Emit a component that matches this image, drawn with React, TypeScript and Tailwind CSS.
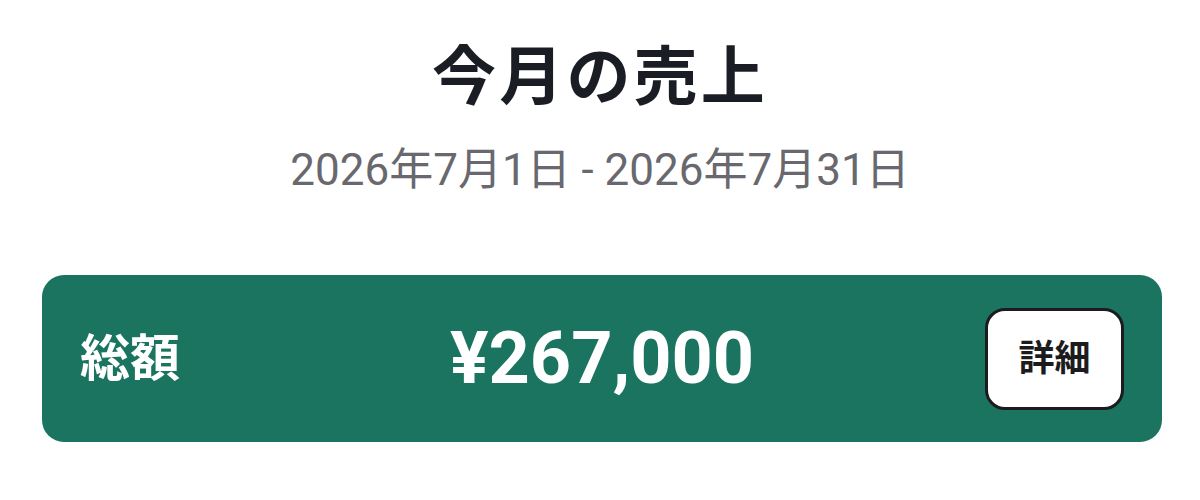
const font = { fontFamily: 'Roboto, "Noto Sans CJK JP", sans-serif' };

export default function App() {
  return (
    <div
      className="w-[1200px] h-[500px] bg-white flex flex-col items-center"
      style={font}
    >
      <h1 className="mt-[34px] text-[64px] leading-[88px] font-bold tracking-[0.05em] text-[#1a1d24]">
        今月の売上
      </h1>
      <p className="mt-[16px] text-[44px] leading-[64px] text-[#68686e]">
        2026年7月1日 - 2026年7月31日
      </p>

      {/* total card */}
      <div className="mt-[73px] ml-[4px] w-[1120px] h-[167px] rounded-[22px] bg-[#1a7460] px-[38px] grid grid-cols-[1fr_auto_1fr] items-center">
        <span className="text-[50px] font-bold text-white leading-none">
          総額
        </span>
        <span className="text-[72px] font-bold text-white leading-none">
          ¥267,000
        </span>
        <div className="flex justify-end">
          <button className="w-[139px] h-[102px] rounded-[20px] bg-white border-[3px] border-[#1c1c1e] text-[36px] font-bold text-[#1c1c1e]">
            詳細
          </button>
        </div>
      </div>
    </div>
  );
}
